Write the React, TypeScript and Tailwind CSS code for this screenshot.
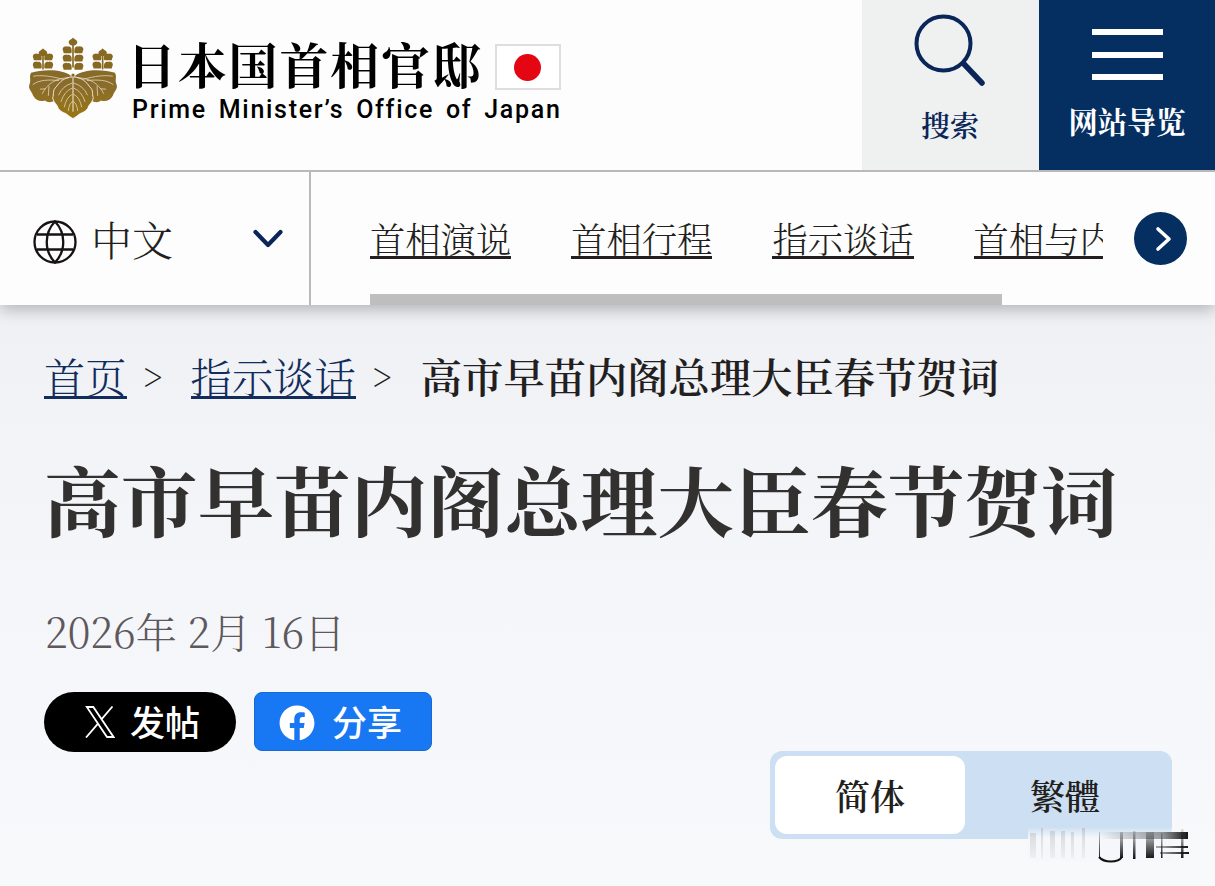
import { FaFacebook } from 'react-icons/fa'

const navItems = ['首相演说', '首相行程', '指示谈话', '首相与内阁']

const florets = [
  { x: 100, y: 84, s: 0.98, rows: 2 },
  { x: 190, y: 52, s: 1, rows: 3 },
  { x: 279, y: 84, s: 0.98, rows: 2 },
]

function Emblem() {
  return (
    <svg viewBox="55 50 270 245" className="h-[82px] w-[90px] flex-none" aria-hidden="true">
      <defs>
        <linearGradient id="gold" gradientUnits="userSpaceOnUse" x1="0" y1="50" x2="0" y2="295">
          <stop offset="0" stopColor="#81651f" />
          <stop offset="0.6" stopColor="#8a6c2c" />
          <stop offset="1" stopColor="#9a7614" />
        </linearGradient>
      </defs>
      <g fill="url(#gold)">
        {florets.map((f) => (
          <g key={f.x} fill="#876922" transform={`translate(${f.x} ${f.y}) scale(${f.s})`}>
            <path d="M0 -1C4 5 13 7 13 13C13 19 7 22 3 23H-3C-7 22 -13 19 -13 13C-13 7 -4 5 0 -1Z" />
            <rect x="-2.5" y="18" width="5" height={f.rows * 25 - 4} />
            {Array.from({ length: f.rows }, (_, i) => (
              <g key={i} transform={`translate(0 ${(f.rows === 2 ? 13 : 23) + i * 25})`}>
                <path d="M-4 21C-4 14 -3 8 -9 4C-14 1 -18 5 -19 2C-24 2 -31 4 -31 10C-32 14 -28 18 -28 23H-6Z" />
                <path d="M4 21C4 14 3 8 9 4C14 1 18 5 19 2C24 2 31 4 31 10C32 14 28 18 28 23H6Z" />
              </g>
            ))}
          </g>
        ))}
        <path d="M186 167C160 145 100 145 64 157C57 171 66 178 59 193C55 207 67 213 70 225C78 239 92 245 106 240C116 249 130 244 138 239L186 180Z" />
        <path d="M194 167C220 145 280 145 316 157C323 171 314 178 321 193C325 207 313 213 310 225C302 239 288 245 274 240C264 249 250 244 242 239L194 180Z" />
        <path
          d="M190 169C164 170 149 185 140 199C127 209 134 221 129 232C131 247 143 251 146 264C156 278 169 276 177 286C183 290 187 293 190 294C193 293 197 290 203 286C211 276 224 278 234 264C237 251 249 247 251 232C246 221 253 209 240 199C231 185 216 170 190 169Z"
          stroke="#fdfdfd"
          strokeWidth="2.5"
        />
      </g>
      <g fill="none" stroke="#e9dfc4" strokeWidth="2.2" strokeLinecap="round">
        <path strokeWidth="3.4" d="M190 174V272" />
        <path d="M187 188Q158 196 147 223M193 188Q222 196 233 223M187 203Q163 213 154 243M193 203Q217 213 226 243M187 222Q170 230 164 259M193 222Q210 230 216 259M188 243Q178 250 176 270M192 243Q202 250 204 270" />
        <path d="M176 172C140 172 112 190 98 219M158 176C125 167 95 163 72 167M147 180C118 177 87 178 70 192M118 197L116 225M106 205L92 206" />
        <path d="M204 172C240 172 268 190 282 219M222 176C255 167 285 163 308 167M233 180C262 177 293 178 310 192M262 197L264 225M274 205L288 206" />
      </g>
      <circle cx="190" cy="164" r="6" fill="#876922" stroke="#fdfdfd" strokeWidth="2" />
    </svg>
  )
}

function GlobeIcon() {
  return (
    <svg viewBox="0 0 44 44" className="size-11 flex-none" fill="none" stroke="#171214" strokeWidth="2.3">
      <circle cx="22" cy="22" r="20.5" />
      <path d="M22 1.5C11 13 11 31 22 42.5C33 31 33 13 22 1.5ZM4 14.5H40M4 29.5H40" />
    </svg>
  )
}

function XLogo() {
  return (
    <svg viewBox="0 0 30 32" className="h-8 w-[30px] flex-none" fill="none" stroke="#fff" strokeWidth="1.8">
      <path d="M1.8 1H8.3L28.5 31H22L1.8 1ZM27.5 .5L16.2 13.7M13.2 17.3L1 31.5" />
    </svg>
  )
}

function Smudge() {
  return (
    <svg viewBox="0 0 162 38" className="absolute right-[25px] bottom-[21px] h-[38px] w-[162px]" aria-hidden="true">
      <defs>
        <linearGradient id="veil" x1="0" y1="0" x2="0" y2="1">
          <stop offset="0" stopColor="#f5f7fa" stopOpacity="0" />
          <stop offset="0.3" stopColor="#f5f7fa" stopOpacity="0.95" />
          <stop offset="1" stopColor="#f5f7fa" />
        </linearGradient>
        <linearGradient id="fade" x1="0" y1="0" x2="0" y2="1">
          <stop offset="0" stopColor="#111" stopOpacity="0.1" />
          <stop offset="1" stopColor="#111" />
        </linearGradient>
        <linearGradient id="bar" x1="0" x2="1">
          <stop offset="0" stopColor="#111" stopOpacity="0" />
          <stop offset="0.7" stopColor="#111" stopOpacity="0.4" />
          <stop offset="1" stopColor="#111" />
        </linearGradient>
        <linearGradient id="ghost" x1="0" y1="0" x2="0" y2="1">
          <stop offset="0" stopColor="#8b8f95" stopOpacity="0.3" />
          <stop offset="1" stopColor="#8b8f95" stopOpacity="0.08" />
        </linearGradient>
      </defs>
      <path d="M0 0H145V34H0Z" fill="url(#veil)" />
      <path d="M2 6H8V31H2ZM13 1H15V31H13ZM22 4H27V31H22ZM33 4H37V31H33ZM43 5H46V31H43ZM54 1H57V31H54Z" fill="url(#ghost)" />
      <path d="M71 5H72V31H71ZM92 5H95V31H92ZM105 4H107.5V32H105ZM118 5H126V31H118ZM133 6H134.5V31H133ZM153 2H155.5V31H153Z" fill="url(#fade)" />
      <path d="M71 30C76 36 90 36 94 30" fill="none" stroke="#111" strokeWidth="2" />
      <path d="M72 5H160V12H72ZM128 19H160V21H128ZM132 25H161V27H132Z" fill="url(#bar)" />
    </svg>
  )
}

export default function App() {
  return (
    <div
      lang="zh-CN"
      className="relative flex h-[886px] w-[1215px] flex-col overflow-hidden bg-linear-to-b from-[#eff1f5] from-35% via-[#f3f5f9] via-60% to-[#f7f9fb] font-['Noto_Serif_CJK_SC','Noto_Serif_SC','Liberation_Serif','Noto_Sans_CJK_SC',serif] font-light whitespace-nowrap text-[#231f20]"
    >
      <header className="relative z-10 flex-none bg-[#fdfdfd] shadow-[0_5px_15px_rgba(0,0,0,0.25)]">
        <div className="flex h-[172px] border-b-2 border-[#b9b9bb]">
          <div className="flex flex-1 items-start pt-[37px] pl-7">
            <Emblem />
            <div className="ml-[9px] text-black">
              <div className="flex h-[57px] items-center">
                <span className="-mt-1 text-[49px] leading-none font-bold tracking-[1.8px]">日本国首相官邸</span>
                <span className="mt-[3px] ml-3 flex h-[46px] w-[66px] flex-none items-center justify-center border-2 border-[#dedede] bg-white">
                  <span className="size-[27px] rounded-full bg-[#e40613]" />
                </span>
              </div>
              <div className="ml-[5px] font-['Roboto',sans-serif] text-[25px] leading-[31px] font-medium tracking-[1.7px] [word-spacing:4px]">
                Prime Minister’s Office of Japan
              </div>
            </div>
          </div>
          <button className="flex w-[177px] flex-col items-center bg-[#eff0f0] pt-[14px] pr-px text-[#0a2558]">
            <svg viewBox="0 0 72 73" className="h-[73px] w-[72px]" fill="none" stroke="currentColor" strokeLinecap="round">
              <circle cx="29.5" cy="29.5" r="27" strokeWidth="4" />
              <path d="M50 50L68 69" strokeWidth="5.5" />
            </svg>
            <span className="mt-[23px] text-[29px] leading-[30px] font-semibold">搜索</span>
          </button>
          <button className="flex w-[176px] flex-col items-center bg-[#052e61] pt-[29px] text-white">
            <span className="flex h-[51px] w-[71px] flex-col justify-between">
              <span className="h-1.5 bg-white" />
              <span className="h-1.5 bg-white" />
              <span className="h-1.5 bg-white" />
            </span>
            <span className="mt-[25px] text-[29.3px] leading-[30px] font-bold">网站导览</span>
          </button>
        </div>

        <div className="flex h-[133px]">
          <button className="flex w-[311px] flex-none items-center border-r-2 border-[#b9b9bb] pl-[33px]">
            <span className="pt-1.5">
              <GlobeIcon />
            </span>
            <span className="ml-[14px] text-[41px] leading-none">中文</span>
            <svg viewBox="0 0 32 20" className="mt-[1px] ml-[79px] h-5 w-8" fill="none" stroke="#0a2558" strokeWidth="4.2" strokeLinecap="round" strokeLinejoin="round">
              <path d="M3.5 3L16 16L28.5 3" />
            </svg>
          </button>
          <div className="ml-[59px] flex w-[733px] flex-none flex-col justify-between overflow-hidden">
            <nav className="flex gap-[60px] pt-[47px] text-[35.3px] leading-[38px]">
              {navItems.map((item) => (
                <a key={item} href="#" className="h-10 flex-none border-b-3 border-[#231f20]">
                  {item}
                </a>
              ))}
            </nav>
            <div className="h-[11px] w-[632px] bg-[#bebebe]" />
          </div>
          <div className="flex flex-1 items-center pl-[31px]">
            <button className="flex size-[53px] items-center justify-center rounded-full bg-[#052e61]">
              <svg viewBox="0 0 18 26" className="ml-1.5 h-[26px] w-[18px]" fill="none" stroke="#fff" strokeWidth="3.6" strokeLinecap="round" strokeLinejoin="round">
                <path d="M3 3L14 13L3 23" />
              </svg>
            </button>
          </div>
        </div>
      </header>

      <main className="flex flex-1 flex-col px-[44px] pt-[49px]">
        <div className="flex h-[46px] items-start text-[41.3px] leading-[42px]">
          <a href="#" className="h-[45px] border-b-3 border-[#122c5b] text-[#122c5b]">首页</a>
          <span className="ml-4 w-[48px] text-[36px]">&gt;</span>
          <a href="#" className="h-[45px] border-b-3 border-[#122c5b] text-[#122c5b]">指示谈话</a>
          <span className="ml-4 w-[49px] text-[36px]">&gt;</span>
          <span className="font-semibold">高市早苗内阁总理大臣春节贺词</span>
        </div>

        <h1 className="mt-[48px] text-[76.7px] leading-[100px] font-bold text-[#33312f]">
          高市早苗内阁总理大臣春节贺词
        </h1>

        <p className="mt-[58px] ml-px text-[41.2px] leading-[50px] text-[#5e585c]">2026年 2月 16日</p>

        <div className="mt-[36px] flex gap-[18px] font-['Noto_Sans_CJK_SC',sans-serif] text-[35px] leading-none font-medium text-white">
          <button className="flex h-[60px] w-[192px] items-center rounded-full bg-black pl-[41px]">
            <XLogo />
            <span className="-mt-1 ml-[15px]">发帖</span>
          </button>
          <button className="flex h-[59px] w-[178px] items-center rounded-lg border border-[#1768d0] bg-[#1877f2] pl-6">
            <FaFacebook className="mt-0.5 size-9 flex-none" />
            <span className="-mt-0.5 ml-[17px]">分享</span>
          </button>
        </div>

        <div className="-mt-px -mr-[1px] flex h-[88px] w-[402px] flex-none self-end rounded-xl bg-[#cddff2] p-[5px] text-[35px] leading-[76px] font-semibold">
          <button className="w-[190px] rounded-xl bg-white">简体</button>
          <button className="ml-[6px] flex-1 pr-2">繁體</button>
        </div>
      </main>
      <Smudge />
    </div>
  )
}
